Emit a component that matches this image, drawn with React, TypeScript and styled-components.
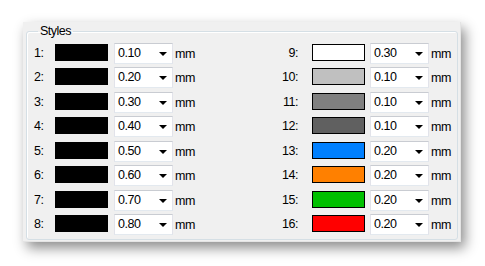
import React from 'react';
import styled, { createGlobalStyle } from 'styled-components';

const GlobalStyle = createGlobalStyle`
  body {
    margin: 0;
    background: #ffffff;
    font-family: "Liberation Sans", Arial, sans-serif;
    font-size: 12.5px;
    color: #000;
  }
`;

const Page_ = styled.div`
  width: 485px;
  height: 266px;
  padding: 22px 0 0 23px;
  box-sizing: border-box;
`;

const Panel_ = styled.div`
  width: 438px;
  height: 220px;
  box-sizing: border-box;
  background: #f0f0f0;
  border-right: 1px solid #e4e4e4;
  border-bottom: 1px solid #e4e4e4;
  box-shadow: 4px 6px 12px rgba(0, 0, 0, 0.45);
  padding: 2px 2px 1px 3px;
`;

const Group_ = styled.fieldset`
  margin: 0;
  height: 100%;
  box-sizing: border-box;
  border: 1px solid #d5dfe5;
  border-radius: 3px;
  box-shadow: inset 1px 1px 0 #ffffff;
  padding: 5px 0 0 7px;
  display: flex;
`;

const Legend_ = styled.legend`
  margin-left: 4px;
  padding: 0 2px;
  letter-spacing: -0.5px;
  line-height: 14px;
`;

const Column_ = styled.div<{ $width?: number }>`
  width: ${(p) => (p.$width ? `${p.$width}px` : 'auto')};
  display: flex;
  flex-direction: column;
`;

const Row_ = styled.div`
  height: 24.43px;
  display: flex;
  align-items: flex-start;
`;

const Label_ = styled.div<{ $right?: boolean }>`
  width: ${(p) => (p.$right ? '30px' : '21px')};
  box-sizing: border-box;
  padding-right: ${(p) => (p.$right ? '14px' : '0')};
  text-align: ${(p) => (p.$right ? 'right' : 'left')};
  line-height: 17px;
  margin-top: 2px;
  letter-spacing: -0.5px;
`;

const Swatch_ = styled.div<{ $color: string }>`
  width: 53px;
  height: 17px;
  margin-top: 1px;
  box-sizing: border-box;
  border: 1px solid #000;
  background: ${(p) => p.$color};
`;

const Combo_ = styled.div<{ $gap: number }>`
  width: 59px;
  height: 21px;
  margin-left: ${(p) => p.$gap}px;
  box-sizing: border-box;
  background: #fff;
  border: 1px solid;
  border-color: #c9ccd2 #e2e3ea #e3e9ef #e2e3ea;
  display: flex;
  align-items: center;
  padding-left: 3px;
  letter-spacing: -0.5px;
`;

const ComboText_ = styled.span`
  flex: 1;
  line-height: 17px;
`;

const Arrow_ = styled.span`
  width: 0;
  height: 0;
  margin-right: 5px;
  margin-top: 1px;
  border-left: 4px solid transparent;
  border-right: 4px solid transparent;
  border-top: 4px solid #000;
`;

const Unit_ = styled.div`
  margin-left: 2px;
  line-height: 17px;
  margin-top: 3px;
  letter-spacing: -0.5px;
`;

type Style = { n: number; color: string; width: string };

const left: Style[] = [
  { n: 1, color: '#000000', width: '0.10' },
  { n: 2, color: '#000000', width: '0.20' },
  { n: 3, color: '#000000', width: '0.30' },
  { n: 4, color: '#000000', width: '0.40' },
  { n: 5, color: '#000000', width: '0.50' },
  { n: 6, color: '#000000', width: '0.60' },
  { n: 7, color: '#000000', width: '0.70' },
  { n: 8, color: '#000000', width: '0.80' },
];

const right: Style[] = [
  { n: 9, color: '#ffffff', width: '0.30' },
  { n: 10, color: '#c0c0c0', width: '0.10' },
  { n: 11, color: '#808080', width: '0.10' },
  { n: 12, color: '#606060', width: '0.10' },
  { n: 13, color: '#0080ff', width: '0.20' },
  { n: 14, color: '#ff8000', width: '0.20' },
  { n: 15, color: '#00c000', width: '0.20' },
  { n: 16, color: '#ff0000', width: '0.20' },
];

function StyleRow({ s, rightSide }: { s: Style; rightSide?: boolean }) {
  return (
    <Row_>
      <Label_ $right={rightSide}>{s.n}:</Label_>
      <Swatch_ $color={s.color} />
      <Combo_ $gap={rightSide ? 5 : 6}>
        <ComboText_>{s.width}</ComboText_>
        <Arrow_ />
      </Combo_>
      <Unit_>mm</Unit_>
    </Row_>
  );
}

function App() {
  return (
    <Page_>
      <GlobalStyle />
      <Panel_>
        <Group_>
          <Legend_>Styles</Legend_>
          <Column_ $width={248}>
            {left.map((s) => (
              <StyleRow key={s.n} s={s} />
            ))}
          </Column_>
          <Column_>
            {right.map((s) => (
              <StyleRow key={s.n} s={s} rightSide />
            ))}
          </Column_>
        </Group_>
      </Panel_>
    </Page_>
  );
}

export default App;
